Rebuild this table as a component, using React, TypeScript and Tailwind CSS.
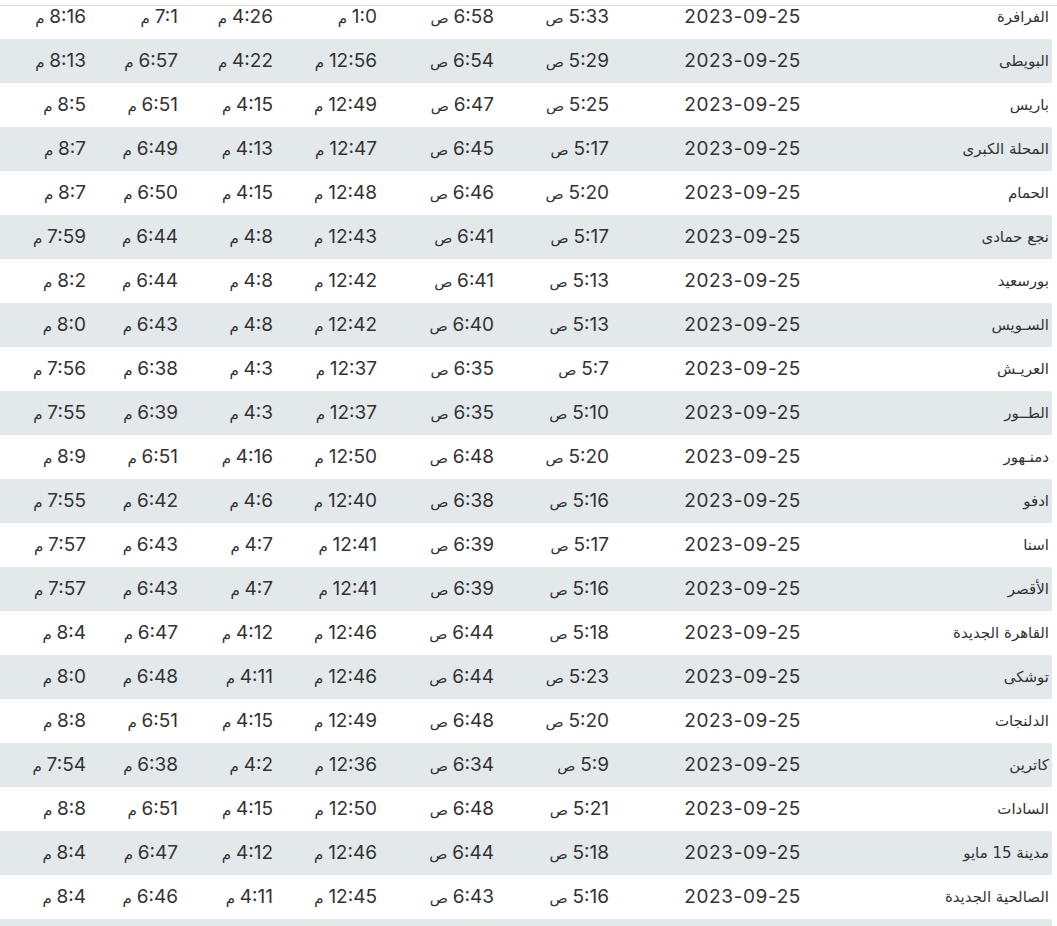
import React from "react";

type Row = [string, string, string, string, string, string, string];

const rows: Row[] = [
  ["الفرافرة", "5:33", "6:58", "1:0", "4:26", "7:1", "8:16"],
  ["البويطى", "5:29", "6:54", "12:56", "4:22", "6:57", "8:13"],
  ["باريس", "5:25", "6:47", "12:49", "4:15", "6:51", "8:5"],
  ["المحلة الكبرى", "5:17", "6:45", "12:47", "4:13", "6:49", "8:7"],
  ["الحمام", "5:20", "6:46", "12:48", "4:15", "6:50", "8:7"],
  ["نجع حمادى", "5:17", "6:41", "12:43", "4:8", "6:44", "7:59"],
  ["بورسعيد", "5:13", "6:41", "12:42", "4:8", "6:44", "8:2"],
  ["السـويس", "5:13", "6:40", "12:42", "4:8", "6:43", "8:0"],
  ["العريـش", "5:7", "6:35", "12:37", "4:3", "6:38", "7:56"],
  ["الطــور", "5:10", "6:35", "12:37", "4:3", "6:39", "7:55"],
  ["دمنـهور", "5:20", "6:48", "12:50", "4:16", "6:51", "8:9"],
  ["ادفو", "5:16", "6:38", "12:40", "4:6", "6:42", "7:55"],
  ["اسنا", "5:17", "6:39", "12:41", "4:7", "6:43", "7:57"],
  ["الأقصر", "5:16", "6:39", "12:41", "4:7", "6:43", "7:57"],
  ["القاهرة الجديدة", "5:18", "6:44", "12:46", "4:12", "6:47", "8:4"],
  ["توشكى", "5:23", "6:44", "12:46", "4:11", "6:48", "8:0"],
  ["الدلنجات", "5:20", "6:48", "12:49", "4:15", "6:51", "8:8"],
  ["كاترين", "5:9", "6:34", "12:36", "4:2", "6:38", "7:54"],
  ["السادات", "5:21", "6:48", "12:50", "4:15", "6:51", "8:8"],
  ["مدينة 15 مايو", "5:18", "6:44", "12:46", "4:12", "6:47", "8:4"],
  ["الصالحية الجديدة", "5:16", "6:43", "12:45", "4:11", "6:46", "8:4"],
  ["", "", "", "", "", "", ""],
];

const suffixes = ["ص", "ص", "م", "م", "م", "م"];

function Time({ t, s }: { t: string; s: string }) {
  if (!t) return null;
  return (
    <span className="whitespace-nowrap">
      <span className="text-[19px] font-[Inter,sans-serif]">{t}</span>
      <span className="text-[15px] font-['DejaVu_Sans',sans-serif]"> {s}</span>
    </span>
  );
}

export default function App() {
  return (
    <div className="relative w-[1057px] h-[926px] overflow-hidden bg-white text-[#333333]">
      <div className="absolute left-0 right-0 top-[5px] h-px bg-[#dcdcdc] z-10" />
      <div dir="rtl" className="w-[1052px] mt-[-5px] flex flex-col">
        {rows.map((r, i) => (
          <div
            key={i}
            className={`grid grid-cols-[248px_192px_115px_117px_104px_95px_92px_89px] h-[44px] items-center ${
              i % 2 === 1 ? "bg-[#e3e9eb]" : "bg-white"
            }`}
          >
            <div className="pr-[3px] text-right text-[15px] font-['DejaVu_Sans',sans-serif] whitespace-nowrap">
              {r[0]}
            </div>
            <div className="pr-[3px] text-right text-[19px] font-[Inter,sans-serif] tracking-[0.6px]">
              {r[0] ? "2023-09-25" : ""}
            </div>
            {r.slice(1).map((t, j) => (
              <div key={j} className="pr-[3px] text-right">
                <Time t={t} s={suffixes[j]} />
              </div>
            ))}
          </div>
        ))}
      </div>
    </div>
  );
}
